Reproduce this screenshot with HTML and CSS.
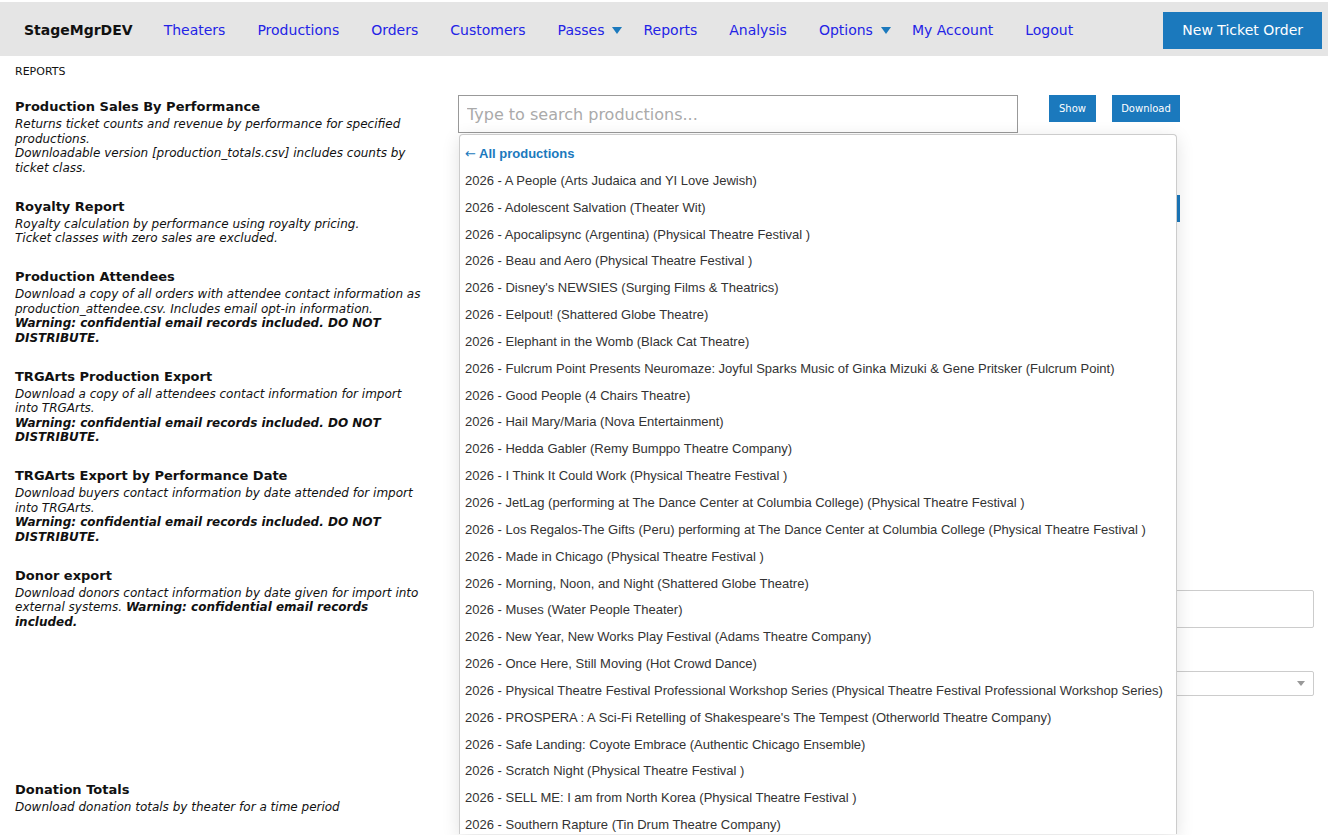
FILE: index.html
```html
<!DOCTYPE html>
<html lang="en">
<head>
  <meta charset="UTF-8" />
  <meta name="viewport" content="width=device-width, initial-scale=1" />
  <title>Reports - StageMgrDEV</title>
  <link rel="stylesheet" href="styles.css">
</head>
<body>

  <nav class="topbar">
    <a class="brand" href="#">StageMgrDEV</a>
    <ul class="menu">
      <li><a href="#">Theaters</a></li>
      <li><a href="#">Productions</a></li>
      <li><a href="#">Orders</a></li>
      <li><a href="#">Customers</a></li>
      <li class="has-sub"><a href="#">Passes<span class="caret"></span></a></li>
      <li><a href="#">Reports</a></li>
      <li><a href="#">Analysis</a></li>
      <li class="has-sub"><a href="#">Options<span class="caret"></span></a></li>
      <li><a href="#">My Account</a></li>
      <li><a href="#">Logout</a></li>
    </ul>
    <a class="btn-order" href="#">New Ticket Order</a>
  </nav>

  <main class="page">
    <div class="crumb">REPORTS</div>

    <section class="report">
      <div class="report-info">
        <h2>Production Sales By Performance</h2>
        <p>Returns ticket counts and revenue by performance for specified productions.<br>
        Downloadable version [production_totals.csv] includes counts by ticket class.</p>
      </div>
      <form class="report-form">
        <div class="search">
          <input type="text" class="search-input" placeholder="Type to search productions..." />
          <ul class="results">
            <li class="all"><span class="arrow">&larr;</span> All productions</li>
            <li>2026 - A People (Arts Judaica and YI Love Jewish)</li>
            <li>2026 - Adolescent Salvation (Theater Wit)</li>
            <li>2026 - Apocalipsync (Argentina) (Physical Theatre Festival )</li>
            <li>2026 - Beau and Aero (Physical Theatre Festival )</li>
            <li>2026 - Disney's NEWSIES (Surging Films &amp; Theatrics)</li>
            <li>2026 - Eelpout! (Shattered Globe Theatre)</li>
            <li>2026 - Elephant in the Womb (Black Cat Theatre)</li>
            <li>2026 - Fulcrum Point Presents Neuromaze: Joyful Sparks Music of Ginka Mizuki &amp; Gene Pritsker (Fulcrum Point)</li>
            <li>2026 - Good People (4 Chairs Theatre)</li>
            <li>2026 - Hail Mary/Maria (Nova Entertainment)</li>
            <li>2026 - Hedda Gabler (Remy Bumppo Theatre Company)</li>
            <li>2026 - I Think It Could Work (Physical Theatre Festival )</li>
            <li>2026 - JetLag (performing at The Dance Center at Columbia College) (Physical Theatre Festival )</li>
            <li>2026 - Los Regalos-The Gifts (Peru) performing at The Dance Center at Columbia College (Physical Theatre Festival )</li>
            <li>2026 - Made in Chicago (Physical Theatre Festival )</li>
            <li>2026 - Morning, Noon, and Night (Shattered Globe Theatre)</li>
            <li>2026 - Muses (Water People Theater)</li>
            <li>2026 - New Year, New Works Play Festival (Adams Theatre Company)</li>
            <li>2026 - Once Here, Still Moving (Hot Crowd Dance)</li>
            <li>2026 - Physical Theatre Festival Professional Workshop Series (Physical Theatre Festival Professional Workshop Series)</li>
            <li>2026 - PROSPERA : A Sci-Fi Retelling of Shakespeare's The Tempest (Otherworld Theatre Company)</li>
            <li>2026 - Safe Landing: Coyote Embrace (Authentic Chicago Ensemble)</li>
            <li>2026 - Scratch Night (Physical Theatre Festival )</li>
            <li>2026 - SELL ME: I am from North Korea (Physical Theatre Festival )</li>
            <li>2026 - Southern Rapture (Tin Drum Theatre Company)</li>
          </ul>
        </div>
        <button type="button" class="btn btn-show">Show</button>
        <button type="button" class="btn btn-dl">Download</button>
      </form>
    </section>

    <section class="report">
      <div class="report-info">
        <h2>Royalty Report</h2>
        <p>Royalty calculation by performance using royalty pricing.<br>
        Ticket classes with zero sales are excluded.</p>
      </div>
      <form class="report-form">
        <select class="prod-select"><option>Select a production</option></select>
        <button type="button" class="btn btn-show">Show</button>
        <button type="button" class="btn btn-dl">Download</button>
      </form>
    </section>

    <section class="report">
      <div class="report-info">
        <h2>Production Attendees</h2>
        <p>Download a copy of all orders with attendee contact information as production_attendee.csv. Includes email opt-in information.<br>
        <b>Warning: confidential email records included. DO NOT DISTRIBUTE.</b></p>
      </div>
      <form class="report-form"></form>
    </section>

    <section class="report">
      <div class="report-info">
        <h2>TRGArts Production Export</h2>
        <p>Download a copy of all attendees contact information for import into TRGArts.<br>
        <b>Warning: confidential email records included. DO NOT DISTRIBUTE.</b></p>
      </div>
      <form class="report-form"></form>
    </section>

    <section class="report">
      <div class="report-info">
        <h2>TRGArts Export by Performance Date</h2>
        <p>Download buyers contact information by date attended for import into TRGArts.<br>
        <b>Warning: confidential email records included. DO NOT DISTRIBUTE.</b></p>
      </div>
      <form class="report-form"></form>
    </section>

    <section class="report">
      <div class="report-info">
        <h2>Donor export</h2>
        <p>Download donors contact information by date given for import into external systems. <b>Warning: confidential email records included.</b></p>
      </div>
      <form class="report-form stacked">
        <input type="text" class="text-field" />
        <div class="select-wrap">
          <select class="plain-select"><option></option></select>
        </div>
      </form>
    </section>

    <section class="report">
      <div class="report-info">
        <h2>Donation Totals</h2>
        <p>Download donation totals by theater for a time period</p>
      </div>
      <form class="report-form"></form>
    </section>
  </main>

</body>
</html>
```

FILE: styles.css
```css
html, body {
  margin: 0;
}
body {
  box-sizing: border-box;
  min-height: 100vh;
  padding-top: 2px;
  font-family: "DejaVu Sans", Verdana, sans-serif;
  color: #111;
  background: #fff;
}

/* top navigation */
.topbar {
  margin-right: 2px;
  height: 54px;
  box-sizing: border-box;
  padding: 2px 6px 0 24px;
  background: #e5e5e5;
  display: flex;
  align-items: center;
}
.brand {
  font-weight: bold;
  font-size: 14px;
  color: #111;
  text-decoration: none;
  margin-right: 15px;
}
.menu {
  list-style: none;
  margin: 0;
  padding: 0;
  display: flex;
  flex: 1;
}
.menu a {
  display: flex;
  align-items: center;
  padding: 0 16px;
  font-size: 14px;
  color: #2323e6;
  text-decoration: none;
}
.menu .has-sub a {
  padding-right: 5px;
}
.caret {
  margin-left: 8px;
  width: 0;
  height: 0;
  border-left: 5.5px solid transparent;
  border-right: 5.5px solid transparent;
  border-top: 7px solid #1b79bd;
}
.btn-order {
  background: #1b79bd;
  color: #fff;
  font-size: 14px;
  text-decoration: none;
  height: 37px;
  line-height: 37px;
  padding: 0 19px;
}

/* page */
.page {
  padding: 9px 16px 0 15px;
}
.crumb {
  font-size: 11px;
  line-height: 14px;
  margin-bottom: 16px;
}
.report {
  display: grid;
  grid-template-columns: 410px 1fr;
  column-gap: 33px;
  padding-bottom: 19.6px;
}
.report h2 {
  margin: 0 0 2px;
  padding-top: 3px;
  font-size: 13px;
  line-height: 17px;
}
.report p {
  margin: 0;
  font-size: 12px;
  line-height: 14.5px;
  font-style: italic;
}

/* forms on the right */
.report-form {
  display: flex;
  align-items: flex-start;
  margin: 0;
}
.search {
  position: relative;
  width: 560px;
}
.search-input {
  box-sizing: border-box;
  width: 560px;
  height: 38px;
  padding: 1px 8px 0;
  border: 1px solid #999;
  font-family: "DejaVu Sans", Verdana, sans-serif;
  font-size: 16px;
  outline: none;
}
.search-input::placeholder {
  color: #aaa;
}
/* long list runs past the bottom of the window */
.results {
  position: absolute;
  z-index: 10;
  left: 1px;
  top: calc(100% + 1px);
  width: 718px;
  box-sizing: border-box;
  max-height: 700px;
  overflow: hidden;
  margin: 0;
  padding: 6px 0 0;
  list-style: none;
  background: #fff;
  border: 1px solid #ccc;
  border-bottom: 0;
  border-radius: 4px 4px 0 0;
  box-shadow: 0 4px 18px rgba(0, 0, 0, 0.12);
  font-family: "Liberation Sans", Arial, sans-serif;
  font-size: 13px;
  color: #333;
}
.results li {
  padding: 0 5px;
  line-height: 26.85px;
  white-space: nowrap;
}
.results .all {
  color: #1b79bd;
  font-weight: bold;
}
.results .arrow {
  font-family: "DejaVu Sans", sans-serif;
  font-weight: normal;
}
.btn {
  height: 27px;
  border: none;
  background: #1b79bd;
  color: #fff;
  font-family: "DejaVu Sans", Verdana, sans-serif;
  font-size: 10px;
  padding: 0;
  cursor: pointer;
}
.btn-show {
  width: 47px;
  margin-left: 31px;
}
.btn-dl {
  width: 68px;
  margin-left: 16px;
}
.prod-select {
  width: 540px;
  height: 27px;
  margin-left: 20px;
}

/* donor export form */
.report-form.stacked {
  flex-direction: column;
  align-items: stretch;
  min-height: 194px;
  padding-left: 20px;
}
.text-field {
  box-sizing: border-box;
  height: 38px;
  margin-top: 26px;
  border: 1px solid #ccc;
  border-radius: 2px;
}
.select-wrap {
  position: relative;
  margin-top: 43px;
}
.select-wrap::after {
  content: "";
  position: absolute;
  right: 9px;
  top: 10px;
  border-left: 4px solid transparent;
  border-right: 4px solid transparent;
  border-top: 5px solid #999;
}
.plain-select {
  appearance: none;
  display: block;
  width: 100%;
  height: 25px;
  border: 1px solid #ccc;
  border-radius: 2px;
  background: #fff;
}
```
